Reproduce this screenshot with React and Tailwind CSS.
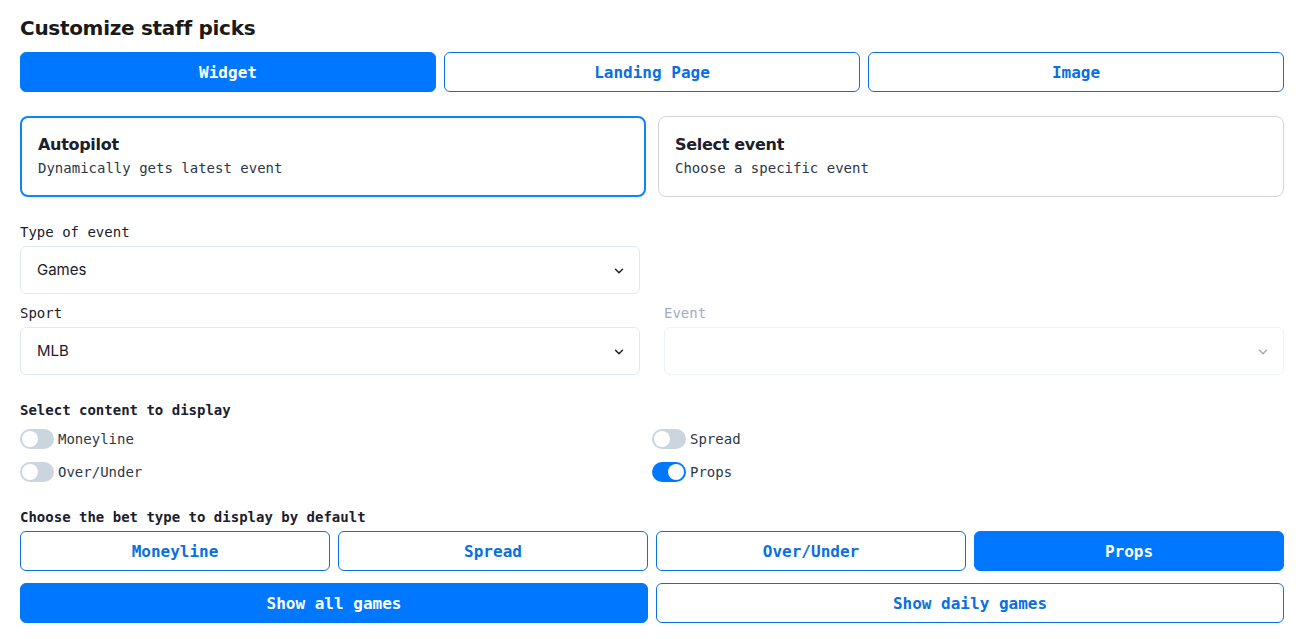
import React, { useState } from 'react';
import { ChevronDown } from 'lucide-react';

const mono = "font-['DejaVu_Sans_Mono','Liberation_Mono',monospace]";
const sans = "font-['Inter','Noto_Sans',sans-serif]";
const wide = "font-['DejaVu_Sans','Inter',sans-serif]";

function Toggle({ on, label, onClick }) {
    return (
        <button type="button" onClick={onClick} className="flex items-center gap-[4px] h-[20px]">
            <span className={`relative w-[34px] h-[20px] rounded-full ${on ? 'bg-[#0077ff]' : 'bg-[#cbd5e0]'}`}>
                <span className={`absolute top-[2px] w-[16px] h-[16px] rounded-full bg-white ${on ? 'left-[16px]' : 'left-[2px]'}`} />
            </span>
            <span className={`${mono} text-[14px] text-[#2d3748]`}>{label}</span>
        </button>
    );
}

function Select({ value, disabled }) {
    return (
        <div className={`flex items-center justify-between h-[48px] pl-[16px] pr-[13px] pt-[1px] rounded-[6px] border ${disabled ? 'border-[#edf2f7]' : 'border-[#e2e8f0]'}`}>
            <span className={`${sans} text-[15px] text-[#1a202c]`}>{value}</span>
            <ChevronDown className={`w-[14px] h-[14px] ${disabled ? 'text-[#a0aec0]' : 'text-[#1a202c]'}`} strokeWidth={2.5} />
        </div>
    );
}

function PillButton({ active, children, onClick }) {
    return (
        <button
            type="button"
            onClick={onClick}
            className={`h-[40px] pt-[2px] rounded-[6px] border ${mono} text-[16px] font-bold ${active ? 'bg-[#0077ff] border-[#0077ff] text-white' : 'bg-white border-[#0a6fe0] text-[#0a6fe0]'}`}
        >
            {children}
        </button>
    );
}

export default function App() {
    const [tab, setTab] = useState('Widget');
    const [mode, setMode] = useState('autopilot');
    const [content, setContent] = useState({ Moneyline: false, Spread: false, 'Over/Under': false, Props: true });
    const [betType, setBetType] = useState('Props');
    const [showAll, setShowAll] = useState(true);

    const flip = (k) => setContent({ ...content, [k]: !content[k] });

    return (
        <div className="min-h-screen bg-white pl-[20px] pr-[27px] pt-[14px]">
            <h1 className={`${wide} text-[20px] font-bold tracking-[-0.3px] text-[#1a1a1a] leading-[28px]`}>Customize staff picks</h1>

            {/* Output tabs */}
            <div className="grid grid-cols-3 gap-[8px] mt-[10px]">
                {['Widget', 'Landing Page', 'Image'].map((t) => (
                    <PillButton key={t} active={tab === t} onClick={() => setTab(t)}>{t}</PillButton>
                ))}
            </div>

            {/* Mode cards */}
            <div className="grid grid-cols-2 gap-[12px] mt-[24px]">
                <button
                    type="button"
                    onClick={() => setMode('autopilot')}
                    className={`h-[81px] rounded-[8px] text-left ${mode === 'autopilot' ? 'border-2 border-[#0a84ff] px-[16px]' : 'border border-[#d1d5db] px-[17px]'}`}
                >
                    <div className={`${wide} text-[16px] font-bold tracking-[-0.3px] text-[#1a202c] leading-[20px]`}>Autopilot</div>
                    <div className={`${mono} text-[14px] text-[#2d3748] mt-[3px]`}>Dynamically gets latest event</div>
                </button>
                <button
                    type="button"
                    onClick={() => setMode('select')}
                    className={`h-[81px] rounded-[8px] text-left ${mode === 'select' ? 'border-2 border-[#0a84ff] px-[15px]' : 'border border-[#d1d5db] px-[16px]'}`}
                >
                    <div className={`${wide} text-[16px] font-bold tracking-[-0.3px] text-[#1a202c] leading-[20px]`}>Select event</div>
                    <div className={`${mono} text-[14px] text-[#2d3748] mt-[3px]`}>Choose a specific event</div>
                </button>
            </div>

            {/* Selects */}
            <div className="grid grid-cols-2 gap-x-[24px] mt-[24px]">
                <div>
                    <div className={`${mono} text-[14px] font-medium text-[#1a202c] leading-[22px] mb-[3px]`}>Type of event</div>
                    <Select value="Games" />
                </div>
                <div />
                <div className="mt-[8px]">
                    <div className={`${mono} text-[14px] font-medium text-[#1a202c] leading-[22px] mb-[3px]`}>Sport</div>
                    <Select value="MLB" />
                </div>
                <div className="mt-[8px]">
                    <div className={`${mono} text-[14px] font-medium text-[#a0aec0] leading-[22px] mb-[3px]`}>Event</div>
                    <Select value="" disabled />
                </div>
            </div>

            {/* Content toggles */}
            <div className={`${mono} text-[14px] font-bold text-[#1a202c] leading-[22px] mt-[24px]`}>Select content to display</div>
            <div className="grid grid-cols-2 gap-y-[13px] mt-[8px]">
                {['Moneyline', 'Spread', 'Over/Under', 'Props'].map((k) => (
                    <div key={k}>
                        <Toggle on={content[k]} label={k} onClick={() => flip(k)} />
                    </div>
                ))}
            </div>

            {/* Default bet type */}
            <div className={`${mono} text-[14px] font-bold text-[#1a202c] leading-[22px] mt-[24px]`}>Choose the bet type to display by default</div>
            <div className="grid grid-cols-4 gap-[8px] mt-[3px]">
                {['Moneyline', 'Spread', 'Over/Under', 'Props'].map((b) => (
                    <PillButton key={b} active={betType === b} onClick={() => setBetType(b)}>{b}</PillButton>
                ))}
            </div>
            <div className="grid grid-cols-2 gap-[8px] mt-[12px]">
                <PillButton active={showAll} onClick={() => setShowAll(true)}>Show all games</PillButton>
                <PillButton active={!showAll} onClick={() => setShowAll(false)}>Show daily games</PillButton>
            </div>
        </div>
    );
}
